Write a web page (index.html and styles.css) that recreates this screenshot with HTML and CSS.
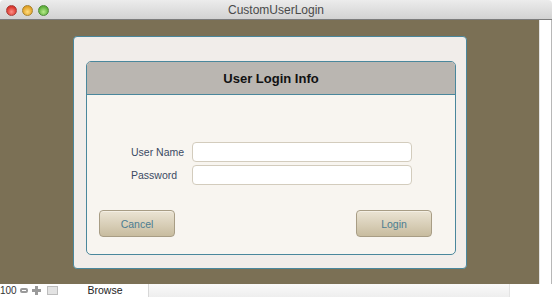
FILE: index.html
```html
<!DOCTYPE html>
<html lang="en">
<head>
    <meta charset="UTF-8">
    <title>CustomUserLogin</title>
    <link rel="stylesheet" href="styles.css">
</head>
<body>
    <div class="window">
        <div class="titlebar">
            <div class="lights">
                <span class="light red"></span>
                <span class="light yellow"></span>
                <span class="light green"></span>
            </div>
            <div class="title">CustomUserLogin</div>
        </div>

        <div class="content">
            <div class="stage">
                <div class="card">
                    <div class="panel">
                        <div class="panel-head">User Login Info</div>
                        <div class="panel-body">
                            <form class="fields">
                                <label for="user">User Name</label>
                                <input type="text" id="user">
                                <label for="pass">Password</label>
                                <input type="password" id="pass">
                            </form>
                            <div class="actions">
                                <button type="button">Cancel</button>
                                <button type="button">Login</button>
                            </div>
                        </div>
                    </div>
                </div>
            </div>
            <div class="side"></div>
        </div>
    </div>

    <div class="statusbar">
        <span class="zoom">100</span>
        <span class="ico minus"></span>
        <span class="ico plus">
            <svg width="9" height="9" viewBox="0 0 9 9"><path d="M3 0h3v3h3v3H6v3H3V6H0V3h3z" fill="#9a9a9a"/></svg>
        </span>
        <span class="ico box"></span>
        <span class="tab">Browse</span>
        <span class="rest"></span>
    </div>
</body>
</html>
```

FILE: styles.css
```css
:root {
    --brown: #7b7055;
    --teal: #4a879c;
    --label: #3b4a63;
}

body {
    margin: 0;
    width: 555px;
    height: 302px;
    background: #fff;
    font-family: "Liberation Sans", Arial, sans-serif;
    overflow: hidden;
}

.window {
    width: 552px;
}

/* Title bar */
.titlebar {
    height: 19px;
    position: relative;
    display: flex;
    align-items: center;
    justify-content: center;
    background: linear-gradient(#ececec, #d2d2d2);
    border-bottom: 1px solid #7c7c7c;
    border-radius: 4px 4px 0 0;
}

.lights {
    position: absolute;
    left: 6px;
    top: 5px;
    display: flex;
    gap: 5px;
}

.light {
    width: 11px;
    height: 11px;
    border-radius: 50%;
    box-sizing: border-box;
}

.red {
    background: radial-gradient(circle at 50% 65%, #ff8f86, #d7332a 70%);
    border: 1px solid #a8403a;
}

.yellow {
    background: radial-gradient(circle at 50% 65%, #ffdd80, #e0a024 70%);
    border: 1px solid #a8822e;
}

.green {
    background: radial-gradient(circle at 50% 65%, #b8ec8a, #5cae3a 70%);
    border: 1px solid #4f8a38;
}

.title {
    font-size: 12px;
    color: #4a4a4a;
    padding-top: 1px;
}

/* Main area */
.content {
    display: flex;
    height: 264px;
}

.stage {
    width: 539px;
    background: var(--brown);
    padding: 16px 0 0 73px;
    box-sizing: border-box;
}

.side {
    flex: 1;
    border-left: 1px solid #e4e4e4;
    border-right: 1px solid #b8b8b8;
}

.card {
    width: 394px;
    height: 233px;
    box-sizing: border-box;
    background: #f1edea;
    border: 1px solid var(--teal);
    border-radius: 4px;
    padding: 24px 10px 0 12px;
}

.panel {
    width: 370px;
    height: 194px;
    box-sizing: border-box;
    border: 1.5px solid var(--teal);
    border-radius: 5px;
    background: #f8f5f0;
    display: flex;
    flex-direction: column;
}

.panel-head {
    height: 32px;
    display: flex;
    align-items: center;
    justify-content: center;
    background: #bab6b1;
    border-bottom: 1.5px solid var(--teal);
    border-radius: 4px 4px 0 0;
    font-size: 13px;
    font-weight: bold;
    color: #111;
}

.panel-body {
    flex: 1;
    padding: 47px 23px 0 12px;
}

.fields {
    display: grid;
    grid-template-columns: 61px 220px;
    row-gap: 3px;
    align-items: center;
    margin: 0 0 0 32px;
}

.fields label {
    font-size: 10.5px;
    color: var(--label);
}

.fields input {
    height: 20px;
    box-sizing: border-box;
    margin: 0;
    padding: 0 5px;
    border: 1px solid #d3ccbd;
    border-radius: 4px;
    background: #fff;
    outline: none;
}

.actions {
    display: flex;
    justify-content: space-between;
    margin-top: 25px;
}

.actions button {
    width: 76px;
    height: 27px;
    padding: 0;
    border: 1px solid #a89d85;
    border-radius: 4px;
    background: linear-gradient(#ebe4d4, #c8bc9f);
    box-shadow: inset 0 1px 0 #f4efe4;
    font-family: "Liberation Sans", Arial, sans-serif;
    font-size: 10.5px;
    color: #4c7d91;
}

/* Status bar */
.statusbar {
    display: flex;
    align-items: center;
    height: 13px;
    font-size: 10px;
    color: #333;
    width: 552px;
}

.zoom {
    width: 20px;
}

.ico {
    display: inline-flex;
    align-items: center;
    justify-content: center;
    margin-right: 4px;
}

.minus {
    width: 8px;
    height: 5px;
    box-sizing: border-box;
    border: 2px solid #9a9a9a;
    border-radius: 2px;
}

.plus {
    width: 9px;
    height: 9px;
}

.box {
    width: 11px;
    height: 9px;
    box-sizing: border-box;
    background: #e3e3e3;
    border: 1px solid #bdbdbd;
    margin-left: 2px;
}

.tab {
    width: 86px;
    height: 13px;
    text-align: center;
    background: #fff;
    border-right: 1px solid #d8d8d8;
    font-size: 10.5px;
    color: #222;
}

.rest {
    width: 360px;
    height: 13px;
    background: linear-gradient(#fafafa, #eeeeee);
    border-right: 1px solid #e4e4e4;
}
```
